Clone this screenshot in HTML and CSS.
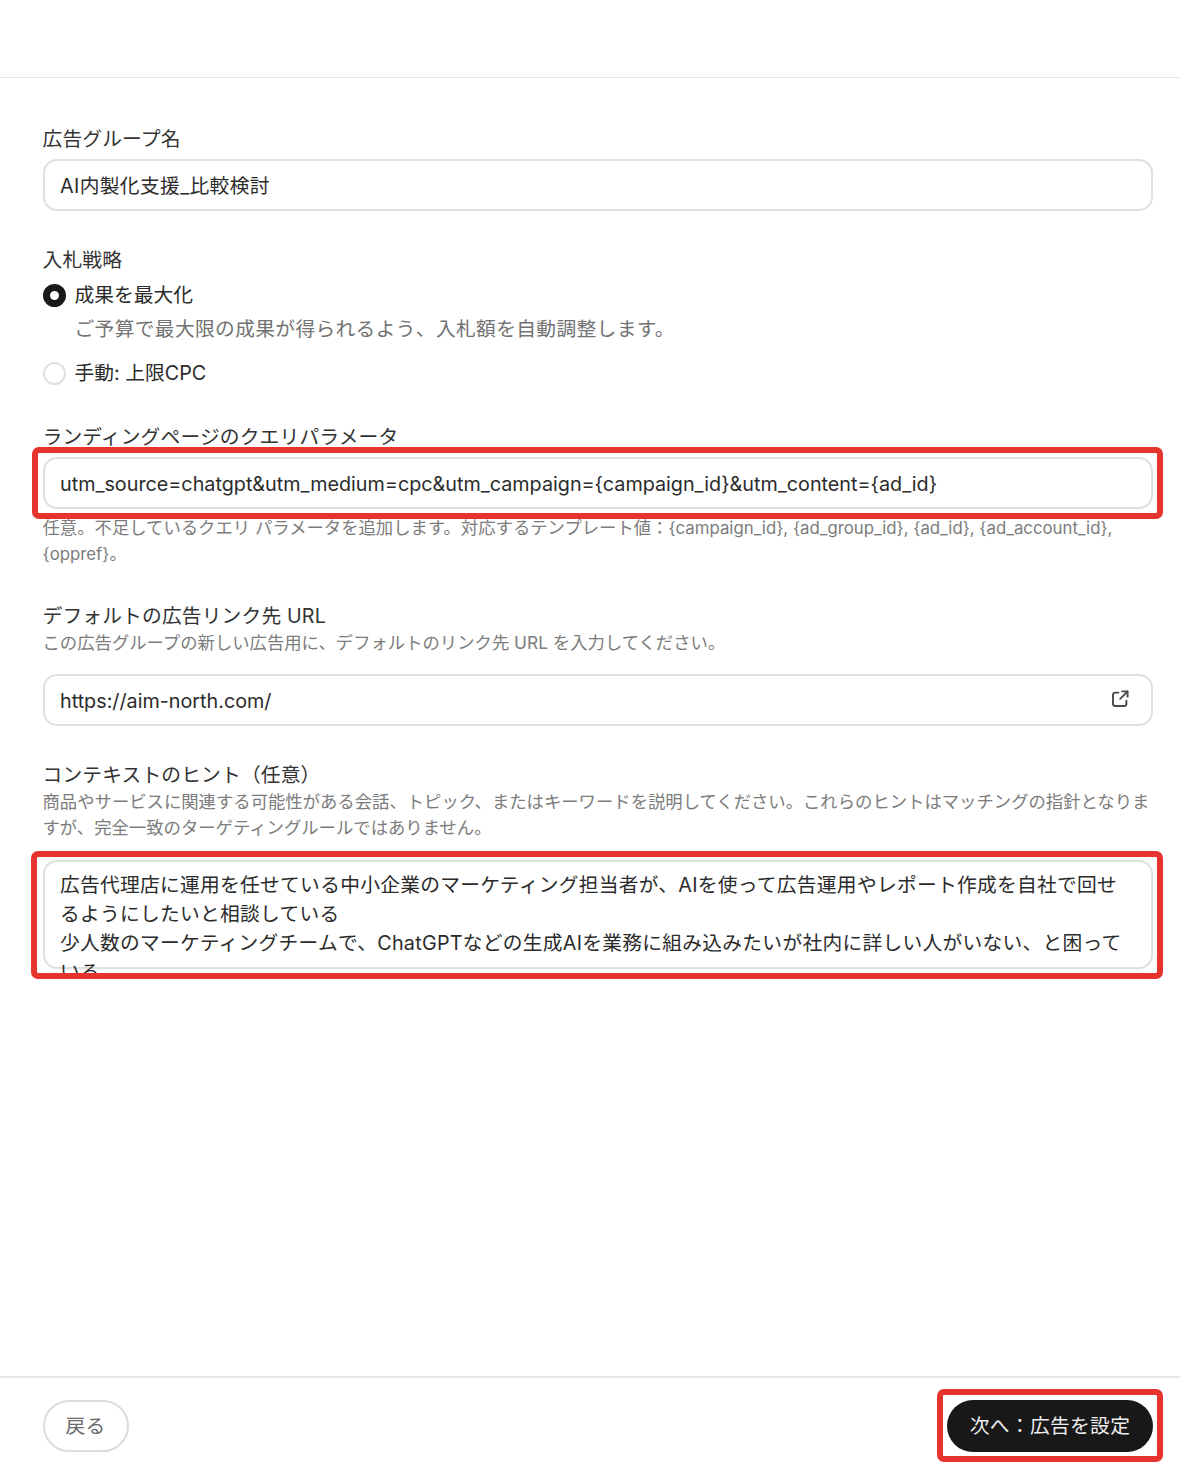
FILE: index.html
```html
<!DOCTYPE html>
<html lang="ja">
<head>
<meta charset="utf-8">
<title>広告グループ</title>
<link rel="stylesheet" href="styles.css">
</head>
<body>
<div class="page">
  <header class="top"></header>
  <main class="form">
    <section class="field f-name">
      <div class="label">広告グループ名</div>
      <div class="input input-cjk">AI内製化支援_比較検討</div>
    </section>
    <section class="field f-bid">
      <div class="label">入札戦略</div>
      <div class="radio-row r-first"><span class="radio on"></span><span>成果を最大化</span></div>
      <div class="radio-desc">ご予算で最大限の成果が得られるよう、入札額を自動調整します。</div>
      <div class="radio-row r-second"><span class="radio"></span><span>手動: 上限CPC</span></div>
    </section>
    <section class="field f-query">
      <div class="label">ランディングページのクエリパラメータ</div>
      <div class="mark-wrap">
        <div class="input">utm_source=chatgpt&amp;utm_medium=cpc&amp;utm_campaign={campaign_id}&amp;utm_content={ad_id}</div>
        <div class="mark mark-query"></div>
      </div>
      <div class="hint hint-after">任意。不足しているクエリ パラメータを追加します。対応するテンプレート値：<span class="tpl">{campaign_id}, {ad_group_id}, {ad_id}, {ad_account_id}, {oppref}</span>。</div>
    </section>
    <section class="field f-url">
      <div class="label">デフォルトの広告リンク先 URL</div>
      <div class="hint hint-under">この広告グループの新しい広告用に、デフォルトのリンク先 URL を入力してください。</div>
      <div class="input input-icon">
        <span>https://aim-north.com/</span>
        <svg class="ext" viewBox="0 0 20 20" width="20" height="20" fill="none" stroke="#4a4a4a" stroke-width="1.9" stroke-linecap="round" stroke-linejoin="round" aria-hidden="true">
          <path d="M8.5 3.6H5.2a2.2 2.2 0 0 0-2.2 2.2v9a2.2 2.2 0 0 0 2.2 2.2h9a2.2 2.2 0 0 0 2.2-2.2v-3.2"/>
          <path d="M10.2 9.8 17.4 2.6"/>
          <path d="M12.2 2.4h5.4v5.4"/>
        </svg>
      </div>
    </section>
    <section class="field f-context">
      <div class="label">コンテキストのヒント（任意）</div>
      <div class="hint hint-under2">商品やサービスに関連する可能性がある会話、トピック、またはキーワードを説明してください。これらのヒントはマッチングの指針となりますが、完全一致のターゲティングルールではありません。</div>
      <div class="mark-wrap">
        <div class="textarea"><div class="textarea-text">広告代理店に運用を任せている中小企業のマーケティング担当者が、AIを使って広告運用やレポート作成を自社で回せるようにしたいと相談している<br>少人数のマーケティングチームで、ChatGPTなどの生成AIを業務に組み込みたいが社内に詳しい人がいない、と困っている</div></div>
        <div class="mark mark-context"></div>
      </div>
    </section>
  </main>
  <footer class="bottom">
    <button class="btn btn-back" type="button">戻る</button>
    <div class="mark-wrap">
      <button class="btn btn-next" type="button">次へ：広告を設定</button>
      <div class="mark mark-next"></div>
    </div>
  </footer>
</div>
</body>
</html>
```

FILE: styles.css
```css
* { box-sizing: border-box; }
html, body { margin: 0; padding: 0; background: #fff; }
body {
  font-family: Inter, "Noto Sans CJK JP", sans-serif;
  color: #2b2b2b;
  font-size: 19.75px;
  line-height: 28px;
  overflow: hidden;
}
.page { width: 1180px; height: 1474px; display: flex; flex-direction: column; }
.top { height: 78px; border-bottom: 1px solid #e4e4e4; flex: none; }
.form { flex: 1; padding: 46px 27px 0 42.5px; display: flex; flex-direction: column; }
.label { color: #333; height: 28px; line-height: 30px; margin-bottom: 7px; letter-spacing: 0.15px; }
.input {
  height: 52px;
  border: 2px solid #e0e0e0;
  border-radius: 14px;
  padding: 1px 15.5px 0;
  display: flex;
  align-items: center;
  white-space: nowrap;
}
.input-cjk { letter-spacing: 0.35px; }
.input-icon { justify-content: space-between; padding-right: 21.5px; }
.ext { display: block; margin-top: -3px; }
.field { flex: none; }
.f-bid { margin-top: 34px; }
.f-query { margin-top: 35px; }
.f-url { margin-top: 34px; }
.f-context { margin-top: 34px; }
.f-bid .label { margin-bottom: 0; }
.radio-row { display: flex; align-items: center; gap: 9px; height: 28px; }
.r-first { margin-top: 8px; }
.r-second { margin-top: 16px; }
.radio {
  width: 23px; height: 23px; border-radius: 50%;
  border: 2px solid #e0e0e0; background: #fff; flex: none;
}
.radio.on { border: 7px solid #1a1a1a; }
.radio-desc { color: #737373; padding-left: 32px; margin-top: 6px; height: 28px; letter-spacing: 0.33px; }
.hint { color: #7c7c7c; font-size: 17.35px; line-height: 26px; }
.tpl { font-size: 16.8px; }
.hint-after { margin-top: 6px; }
.hint-under { margin-top: -6px; margin-bottom: 18px; }
.hint-under2 { margin-top: -6px; margin-bottom: 19px; }
.mark-wrap { position: relative; }
.mark { position: absolute; border: 6.5px solid #e6332d; border-radius: 7px; pointer-events: none; }
.mark-query { left: -11px; right: -10px; top: -10px; bottom: -10px; }
.mark-context { left: -12px; right: -10px; top: -9px; bottom: -10px; }
.mark-next { left: -10px; right: -10px; top: -11px; bottom: -10px; }
.textarea {
  height: 109px;
  border: 2px solid #e0e0e0;
  border-radius: 14px;
  padding: 9px 15.5px 0;
}
.textarea-text { height: 103px; overflow: hidden; line-height: 29px; letter-spacing: 0.26px; }
.bottom {
  height: 98px; flex: none;
  border-top: 2px solid #e8e8e8;
  padding: 22px 27px 0 42.5px;
  display: flex;
  justify-content: space-between;
  align-items: flex-start;
}
.btn {
  height: 52px; border-radius: 26px;
  font: inherit;
  letter-spacing: 0.3px;
  cursor: pointer;
}
.btn-back { width: 86px; background: #fff; border: 2px solid #dcdcdc; color: #6a6a6a; padding: 0; }
.btn-next { display: block; width: 206px; background: #181818; border: none; color: #eee; padding: 0; }
```
